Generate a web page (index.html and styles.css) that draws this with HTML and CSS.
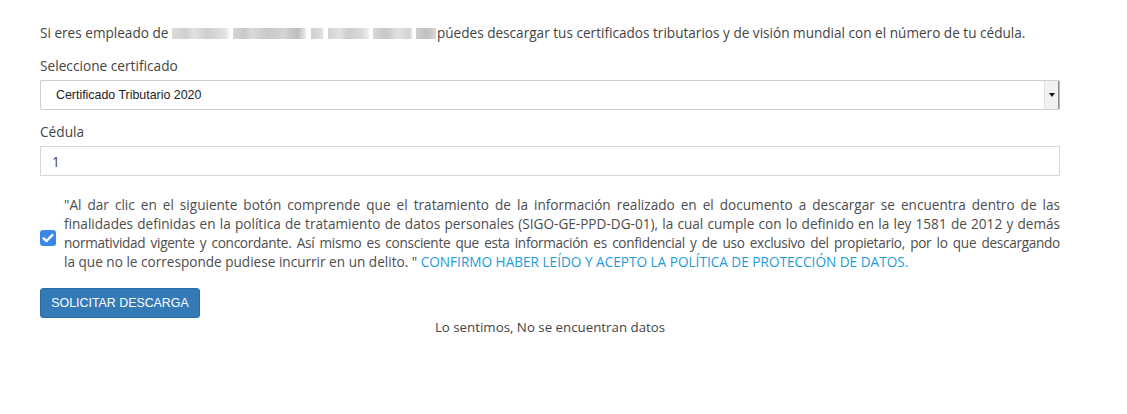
FILE: index.html
```html
<!DOCTYPE html>
<html lang="es">
<head>
<meta charset="utf-8">
<title>Certificados</title>
<link rel="stylesheet" href="styles.css">
</head>
<body>
<main class="page">
  <p class="intro">Si eres empleado de <span class="blur" aria-hidden="true"></span>púedes descargar tus certificados tributarios y de visión mundial con el número de tu cédula.</p>

  <div class="field">
    <label class="label">Seleccione certificado</label>
    <div class="select">
      <span class="select-text">Certificado Tributario 2020</span>
      <span class="select-btn"><span class="tri"></span></span>
    </div>
  </div>

  <div class="field field-cedula">
    <label class="label">Cédula</label>
    <div class="input">1</div>
  </div>

  <div class="consent">
    <span class="check">
      <svg width="16" height="16" viewBox="0 0 16 16"><rect x="0" y="0" width="16" height="16" rx="3" fill="#3b87e8"/><path d="M3.6 8.3 L6.5 11 L12.4 5" fill="none" stroke="#fff" stroke-width="2.4" stroke-linecap="round" stroke-linejoin="round"/></svg>
    </span>
    <p class="consent-text"><span class="ln">"Al dar clic en el siguiente botón comprende que el tratamiento de la información realizado en el documento a descargar se encuentra dentro de las</span> <span class="ln">finalidades definidas en la política de tratamiento de datos personales (SIGO-GE-PPD-DG-01), la cual cumple con lo definido en la ley 1581 de 2012 y demás</span> <span class="ln ln-tight">normatividad vigente y concordante. Así mismo es consciente que esta información es confidencial y de uso exclusivo del propietario, por lo que descargando</span> <span class="ln-last">la que no le corresponde pudiese incurrir en un delito. " <a class="link" href="#">CONFIRMO HABER LEÍDO Y ACEPTO LA POLÍTICA DE PROTECCIÓN DE DATOS.</a></span></p>
  </div>

  <button class="btn" type="button">SOLICITAR DESCARGA</button>
  <p class="empty">Lo sentimos, No se encuentran datos</p>
</main>
</body>
</html>
```

FILE: styles.css
```css
html, body {
  margin: 0;
  padding: 0;
  background: #fff;
}
.page {
  width: 1020px;
  padding: 23px 0 0 40px;
  display: flex;
  flex-direction: column;
  font-family: "Open Sans", "Noto Sans", sans-serif;
  color: #4a4a4a;
}
.intro {
  margin: 0;
  font-size: 13.6px;
  line-height: 20px;
  color: #444;
  white-space: nowrap;
}
.blur {
  display: inline-block;
  width: 264px;
  height: 11px;
  vertical-align: -1px;
  margin-right: 1px;
  background: linear-gradient(to right,
    #dcdcdc 0, #d0d0d0 14px, #e2e2e2 22px, #cfcfcf 34px, #d8d8d8 46px, #e8e8e8 55px,
    #fff 58px, #fff 61px,
    #d6d6d6 61px, #c8c8c8 72px, #dadada 80px, #c9c9c9 95px, #d4d4d4 112px, #bdbdbd 126px, #e6e6e6 133px,
    #fff 135px, #fff 139px,
    #cfcfcf 139px, #dedede 150px, #fff 152px, #fff 156px, #d2d2d2 156px, #e1e1e1 168px,
    #cdcdcd 176px, #dadada 190px, #ededed 196px, #fff 198px, #fff 201px,
    #d8d8d8 201px, #c7c7c7 214px, #e0e0e0 226px, #d3d3d3 238px, #fff 241px, #fff 244px,
    #cfcfcf 244px, #bfbfbf 254px, #d6d6d6 264px);
}
.field {
  display: flex;
  flex-direction: column;
  margin-top: 13px;
}
.field-cedula {
  margin-top: 12px;
}
.label {
  font-size: 13.7px;
  line-height: 20px;
  color: #444;
  margin-bottom: 4px;
}
.select {
  height: 30px;
  box-sizing: border-box;
  border: 1px solid #cfcfcf;
  border-right-color: #b8b8b8;
  border-radius: 2px;
  display: flex;
  align-items: center;
  justify-content: space-between;
  font-family: "Liberation Sans", Arial, sans-serif;
  font-size: 12.4px;
  color: #222;
  background: #fff;
}
.select-text {
  padding-left: 15px;
}
.select-btn {
  align-self: stretch;
  width: 13px;
  background: #f1f1f1;
  border-left: 1px solid #e2e2e2;
  border-right: 1px solid #8a8a8a;
  display: flex;
  align-items: center;
  justify-content: center;
}
.tri {
  width: 0;
  height: 0;
  border-left: 3.5px solid transparent;
  border-right: 3.5px solid transparent;
  border-top: 4px solid #111;
}
.input {
  height: 30px;
  box-sizing: border-box;
  border: 1px solid #d7d7d7;
  display: flex;
  align-items: center;
  padding-left: 11px;
  font-family: "Open Sans", "Noto Sans", sans-serif;
  font-size: 13.6px;
  color: #444;
}
.consent {
  display: flex;
  align-items: flex-start;
  gap: 8px;
  margin-top: 19px;
}
.check {
  flex: none;
  width: 16px;
  height: 16px;
  margin-top: 35px;
  display: flex;
}
.consent-text {
  margin: 0;
  flex: 1;
  font-size: 13.6px;
  line-height: 19px;
  color: #4d4d4d;
}
.ln {
  display: block;
  text-align: justify;
  text-align-last: justify;
}
.ln-tight {
  letter-spacing: -0.3px;
}
.ln-last {
  display: block;
  white-space: nowrap;
}
.link {
  color: #1d9bd9;
  text-decoration: none;
}
.btn {
  align-self: flex-start;
  margin-top: 17px;
  width: 160px;
  height: 30px;
  border: 1px solid #2e6da4;
  border-radius: 3px;
  background: #337ab7;
  color: #fff;
  font-family: "Liberation Sans", Arial, sans-serif;
  font-size: 12.4px;
  padding: 0;
  cursor: pointer;
}
.empty {
  margin: 0;
  font-size: 13.3px;
  line-height: 18px;
  text-align: center;
  color: #444;
}
```
